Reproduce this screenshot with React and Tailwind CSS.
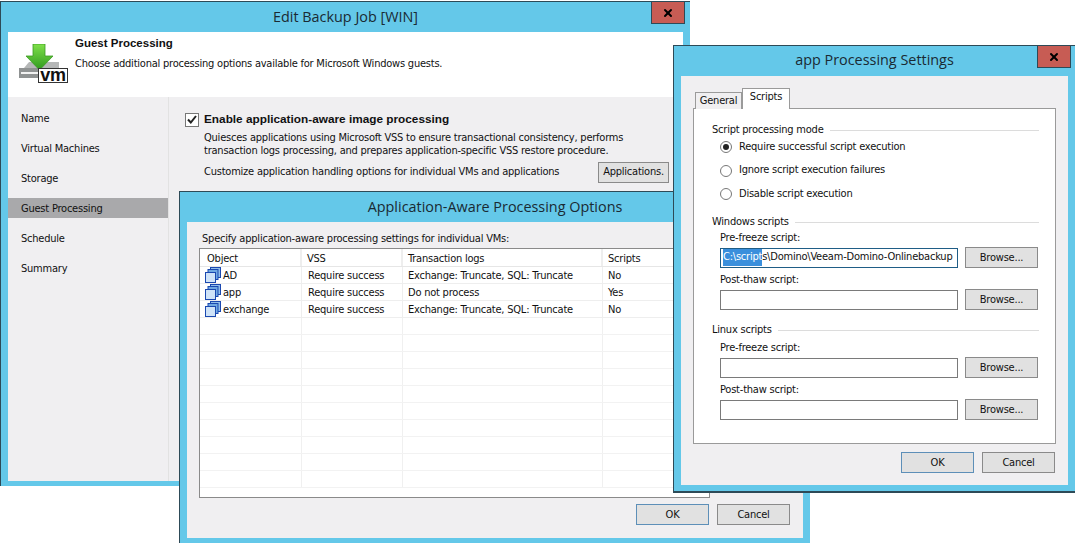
import { X } from 'lucide-react'

const ui = 'font-["DejaVu_Sans_Condensed","Liberation_Sans",sans-serif] text-[11px] tracking-[-0.22px] text-[#111]'
const bold = 'font-["Liberation_Sans",sans-serif] font-bold tracking-normal'
const titleFont = "font-['Open_Sans',sans-serif] text-[14.4px] tracking-normal text-[#1a2a33]"

const steps = ['Name', 'Virtual Machines', 'Storage', 'Guest Processing', 'Schedule', 'Summary']

const rows = [
  { name: 'AD', vss: 'Require success', logs: 'Exchange: Truncate, SQL: Truncate', scripts: 'No' },
  { name: 'app', vss: 'Require success', logs: 'Do not process', scripts: 'Yes' },
  { name: 'exchange', vss: 'Require success', logs: 'Exchange: Truncate, SQL: Truncate', scripts: 'No' },
]

function CloseButton({ className }) {
  return (
    <div className={`absolute h-[22px] w-[34px] flex items-center justify-center bg-[#c75c54] border border-[#2d4a57] border-t-0 ${className}`}>
      <X size={12} strokeWidth={4} className="text-black" />
    </div>
  )
}

function Btn({ children, primary, className = 'w-[73px]' }) {
  return (
    <div className={`h-[21px] pt-px flex items-center justify-center shrink-0 bg-[#e1e1e1] border ${primary ? 'border-[#5d8fb8]' : 'border-[#8a8a8a]'} ${className}`}>
      {children}
    </div>
  )
}

function BackupIcon() {
  return (
    <svg width="50" height="40" viewBox="0 0 50 40" className="shrink-0">
      <defs>
        <linearGradient id="arrow" x1="0" y1="0" x2="0" y2="1">
          <stop offset="0" stopColor="#7fe04a" />
          <stop offset="1" stopColor="#2f9a1e" />
        </linearGradient>
      </defs>
      <path d="M5 24 L10 18 H40 V24 Z" fill="#b5b7b7" />
      <rect x="0" y="24" width="40" height="10" fill="#8f9292" />
      <rect x="2" y="28" width="18" height="2" fill="#f2f2f2" />
      <path d="M14 0 H26 V12 H34 L20.5 26 L7 12 H14 Z" fill="url(#arrow)" stroke="#3a9a22" strokeWidth="0.8" />
      <rect x="19.5" y="24.5" width="29" height="14" fill="#fff" stroke="#333" />
      <text x="34" y="37" textAnchor="middle" fontSize="18" fontWeight="700" fontFamily="Liberation Sans, sans-serif" fill="#111">vm</text>
    </svg>
  )
}

function VmIcon() {
  return (
    <svg width="16" height="16" viewBox="0 0 16 16" className="shrink-0 -mt-[2px]">
      <rect x="5.5" y="0.5" width="10" height="10" fill="#8fbdea" stroke="#1a48b0" />
      <rect x="3" y="2.5" width="10" height="10" fill="#6fa8e2" stroke="#1a48b0" />
      <rect x="0.5" y="5.5" width="10" height="10" fill="#cfe3f8" stroke="#1a48b0" />
    </svg>
  )
}

function Group({ title, children, className = '' }) {
  return (
    <div className={className}>
      <div className="flex items-center gap-[6px] h-[14px]">
        <span>{title}</span>
        <div className="flex-1 h-px bg-[#dcdcdc]" />
      </div>
      {children}
    </div>
  )
}

function Radio({ label, checked }) {
  return (
    <div className="flex items-center gap-[7px] h-[14px] pl-[8px]">
      <div className="w-[12px] h-[12px] rounded-full border border-[#777] bg-white flex items-center justify-center">
        {checked && <div className="w-[6px] h-[6px] rounded-full bg-[#222]" />}
      </div>
      <span>{label}</span>
    </div>
  )
}

function ScriptField({ label, value, className = '' }) {
  return (
    <div className={`pl-[8px] ${className}`}>
      <div className="h-[14px] leading-[15px]">{label}</div>
      <div className="flex items-center gap-[7px] mt-[3px]">
        <div className={`w-[238px] h-[20px] flex items-center overflow-hidden whitespace-nowrap px-[2px] bg-white border ${value ? 'border-[#1f5d86]' : 'border-[#7a7a7a]'}`}>
          {value && (
            <>
              <span className="bg-[#3a8fdc] text-white">C:\script</span>
              <span>s\Domino\Veeam-Domino-Onlinebackup</span>
            </>
          )}
        </div>
        <Btn>Browse...</Btn>
      </div>
    </div>
  )
}

export default function App() {
  return (
    <div className={`relative w-[1075px] h-[543px] overflow-hidden bg-white ${ui}`}>
      {/* Edit Backup Job */}
      <div className="absolute left-0 top-px w-[690px] h-[485px] flex flex-col bg-[#64c8e9] border-t border-l border-[#2d4a57] pl-[7px] pr-[7px] pb-[5px]">
        <div className={`h-[30px] shrink-0 flex items-center justify-center pb-[1px] ${titleFont}`}>Edit Backup Job [WIN]</div>
        <div className="h-[65px] shrink-0 bg-white flex pl-[11px] pt-[12px] gap-[6px]">
          <BackupIcon />
          <div className="-mt-[8px]">
            <div className={`leading-[14px] h-[14px] text-[11.5px] ${bold}`}>Guest Processing</div>
            <div className="mt-[7px] leading-[14px]">Choose additional processing options available for Microsoft Windows guests.</div>
          </div>
        </div>
        <div className="flex-1 flex bg-[#f0eff1]">
          <div className="w-[161px] shrink-0 border-r border-[#e2e2e2] pt-[11px]">
            {steps.map(s => (
              <div key={s} className={`h-[20px] mb-[10px] pl-[13px] pt-[2px] flex items-center ${s === 'Guest Processing' ? 'bg-[#a9a9ab]' : ''}`}>{s}</div>
            ))}
          </div>
          <div className="flex-1 pl-[16px] pr-[14px] pt-[14px]">
            <div className="flex items-center gap-[5px]">
              <div className="w-[14px] h-[14px] bg-white border border-[#777] flex items-center justify-center">
                <svg width="10" height="9" viewBox="0 0 10 9"><path d="M1 4.5 L3.8 7.5 L9 1" fill="none" stroke="#222" strokeWidth="2" /></svg>
              </div>
              <span className={`text-[11.8px] ${bold}`}>Enable application-aware image processing</span>
            </div>
            <div className="pl-[19px] mt-[2px] leading-[13px]">
              Quiesces applications using Microsoft VSS to ensure transactional consistency, performs<br />
              transaction logs processing, and prepares application-specific VSS restore procedure.
            </div>
            <div className="pl-[19px] mt-[5px] flex items-center justify-between">
              <span>Customize application handling options for individual VMs and applications</span>
              <Btn className="w-[71px] overflow-hidden">Applications.</Btn>
            </div>
          </div>
        </div>
        <CloseButton className="left-[650px] top-0" />
      </div>

      {/* Application-Aware Processing Options */}
      <div className="absolute left-[179px] top-[191px] w-[631px] h-[352px] flex flex-col bg-[#64c8e9] border-t border-l border-[#2d4a57] pl-[7px] pr-[7px] pb-[5px]">
        <div className={`h-[30px] shrink-0 flex items-center justify-center pb-[1px] ${titleFont}`}>Application-Aware Processing Options</div>
        <div className="flex-1 bg-[#f0eff1] pl-[12px] pr-[13px] pt-[10px]">
          <div className="pl-[3px] h-[14px] leading-[14px]">Specify application-aware processing settings for individual VMs:</div>
          <div className="mt-[2px] w-[511px] h-[250px] bg-white border border-[#8a8a8a] overflow-hidden">
            <div className="flex h-[18px] border-b border-[#e6e6e6]">
              <div className="w-[102px] pl-[7px] pt-[3px] border-r-2 border-[#eee] flex items-center">Object</div>
              <div className="w-[101px] pl-[5px] pt-[3px] border-r-2 border-[#eee] flex items-center">VSS</div>
              <div className="w-[200px] pl-[5px] pt-[3px] border-r-2 border-[#eee] flex items-center">Transaction logs</div>
              <div className="flex-1 pl-[5px] pt-[3px] flex items-center">Scripts</div>
            </div>
            {rows.map(r => (
              <div key={r.name} className="flex h-[17px] border-b border-[#eeeeee]">
                <div className="w-[102px] pl-[5px] pt-[2px] border-r border-[#eee] flex items-center gap-[2px]"><VmIcon />{r.name}</div>
                <div className="w-[101px] pl-[6px] pt-[2px] border-r border-[#eee] flex items-center">{r.vss}</div>
                <div className="w-[200px] pl-[5px] pt-[2px] border-r border-[#eee] flex items-center">{r.logs}</div>
                <div className="flex-1 pl-[5px] pt-[2px] flex items-center">{r.scripts}</div>
              </div>
            ))}
            {Array.from({ length: 10 }).map((_, i) => (
              <div key={i} className="flex h-[17px] border-b border-[#f2f2f2]">
                <div className="w-[102px] border-r border-[#f0f0f0]" />
                <div className="w-[101px] border-r border-[#f0f0f0]" />
                <div className="w-[200px] border-r border-[#f0f0f0]" />
              </div>
            ))}
          </div>
          <div className="mt-[6px] flex justify-end gap-[8px]">
            <Btn primary>OK</Btn>
            <Btn>Cancel</Btn>
          </div>
        </div>
      </div>

      {/* app Processing Settings */}
      <div className="absolute left-[673px] top-[45px] w-[402px] h-[448px] flex flex-col bg-[#64c8e9] border-t border-l border-b-2 border-[#2d4a57] pl-[7px] pr-[7px] pb-[6px]">
        <div className={`h-[30px] shrink-0 flex items-center justify-center pb-[2px] ${titleFont}`}>app Processing Settings</div>
        <div className="flex-1 bg-[#f0eff1] pl-[12px] pr-[12px] pt-[12px]">
          <div className="flex items-end h-[21px] pl-[2px] relative z-10 -mb-px">
            <div className="w-[47px] h-[17px] flex items-center justify-center bg-[#f0eff1] border border-b-0 border-[#9a9a9a]">General</div>
            <div className="w-[48px] h-[21px] pb-[3px] flex items-center justify-center bg-white border border-b-0 border-[#9a9a9a]">Scripts</div>
          </div>
          <div className="h-[336px] bg-white border border-[#9a9a9a] pl-[18px] pr-[16px] pt-[14px]">
            <Group title="Script processing mode">
              <div className="mt-[3px] flex flex-col gap-[9.5px]">
                <Radio checked label="Require successful script execution" />
                <Radio label="Ignore script execution failures" />
                <Radio label="Disable script execution" />
              </div>
            </Group>
            <Group title="Windows scripts" className="mt-[14px]">
              <ScriptField label="Pre-freeze script:" className="mt-[1px]" value />
              <ScriptField label="Post-thaw script:" className="mt-[4px]" />
            </Group>
            <Group title="Linux scripts" className="mt-[13px]">
              <ScriptField label="Pre-freeze script:" className="mt-[3px]" />
              <ScriptField label="Post-thaw script:" className="mt-[4px]" />
            </Group>
          </div>
          <div className="mt-[8px] flex justify-end gap-[8px] pr-px">
            <Btn primary>OK</Btn>
            <Btn>Cancel</Btn>
          </div>
        </div>
        <CloseButton className="left-[363px] top-0" />
      </div>
    </div>
  )
}
